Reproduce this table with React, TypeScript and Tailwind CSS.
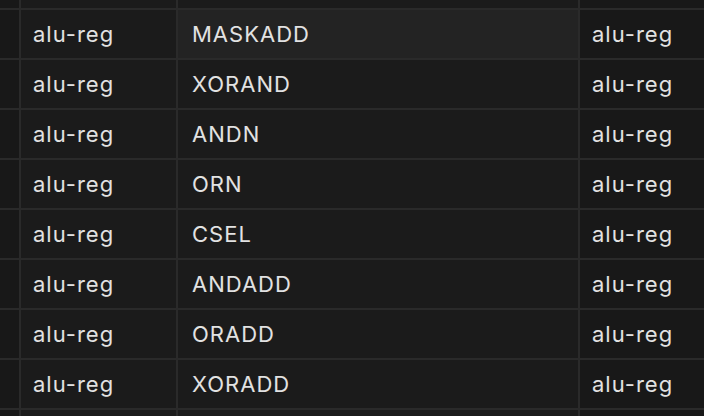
import React from 'react';

const rows = ['MASKADD', 'XORAND', 'ANDN', 'ORN', 'CSEL', 'ANDADD', 'ORADD', 'XORADD'];

const App: React.FC = () => {
  return (
    <div
      className="w-[704px] h-[416px] overflow-hidden bg-[#2a2a2a] grid grid-cols-[19px_155px_400px_1fr] grid-rows-[8px_repeat(8,48px)_1fr] gap-[2px] text-[22px] tracking-[1px] text-[#e2e2e2]"
      style={{ fontFamily: 'Inter, "Noto Sans", sans-serif' }}
    >
      <div className="bg-[#181818]" />
      <div className="bg-[#1b1b1b]" />
      <div className="bg-[#1b1b1b]" />
      <div className="bg-[#181818]" />
      {rows.map((op, i) => (
        <React.Fragment key={op}>
          <div className="bg-[#181818]" />
          <div className="bg-[#1b1b1b] flex items-center px-3 pt-px">alu-reg</div>
          <div className={`${i === 0 ? 'bg-[#232323]' : 'bg-[#1b1b1b]'} flex items-center px-[14px] pt-px`}>
            {op}
          </div>
          <div className="bg-[#181818] flex items-center px-3 pt-px">alu-reg</div>
        </React.Fragment>
      ))}
      <div className="bg-[#181818]" />
      <div className="bg-[#1b1b1b]" />
      <div className="bg-[#1b1b1b]" />
      <div className="bg-[#181818]" />
    </div>
  );
};

export default App;
